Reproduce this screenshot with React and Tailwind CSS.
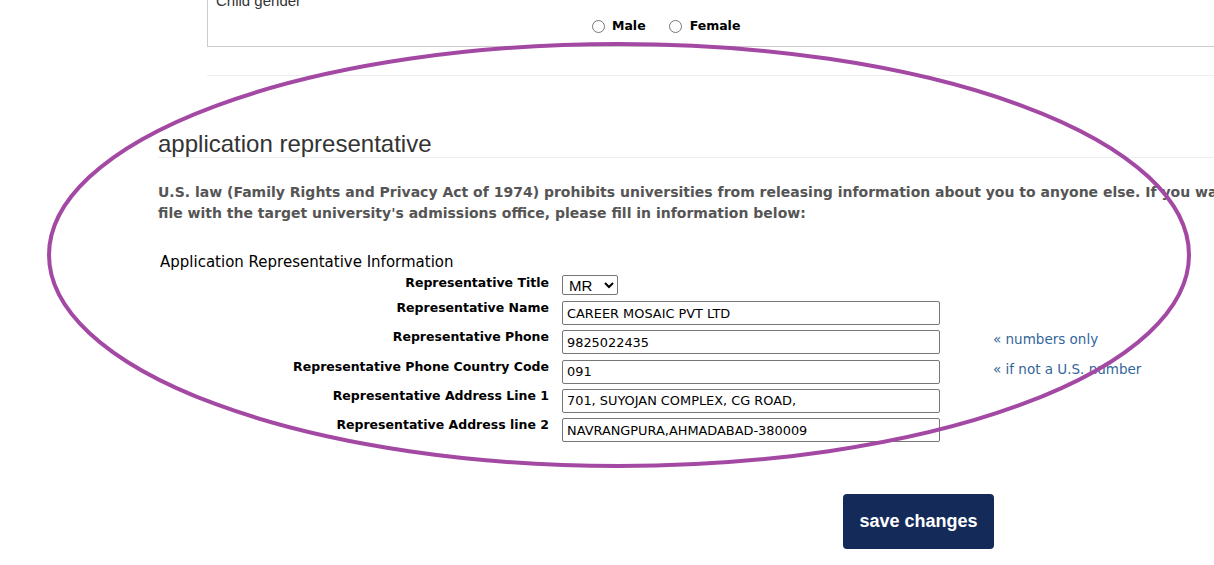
import React from 'react'

const verdana = { fontFamily: '"DejaVu Sans", Verdana, sans-serif' }

const rows = [
  { label: 'Representative Name', value: 'CAREER MOSAIC PVT LTD' },
  { label: 'Representative Phone', value: '9825022435', hint: '« numbers only' },
  { label: 'Representative Phone Country Code', value: '091', hint: '« if not a U.S. number' },
  { label: 'Representative Address Line 1', value: '701, SUYOJAN COMPLEX, CG ROAD,' },
  { label: 'Representative Address line 2', value: 'NAVRANGPURA,AHMADABAD-380009' },
]

function Label({ children }) {
  return (
    <div className="w-[404px] shrink-0 pr-[13px] text-right text-[12.5px] font-bold leading-[16px] text-black font-['DejaVu_Sans',sans-serif]">
      {children}
    </div>
  )
}

function FieldRow({ label, value, hint }) {
  return (
    <div className="flex h-[29.25px] items-start">
      <Label>{label}</Label>
      <input
        readOnly
        value={value}
        className="mt-[1px] h-[24px] w-[378px] rounded-[2px] border border-[#767676] bg-white px-[4px] text-[12.9px] text-black outline-none font-['DejaVu_Sans',sans-serif]"
      />
      {hint && (
        <span className="ml-[53px] mt-[2px] text-[13.5px] leading-[17px] text-[#336699] font-['DejaVu_Sans',sans-serif]">
          {hint}
        </span>
      )}
    </div>
  )
}

export default function App() {
  return (
    <div className="relative h-[565px] w-[1214px] overflow-hidden bg-white font-['Liberation_Sans',Arial,sans-serif]">
      {/* previous section (cut off at the top) */}
      <div className="ml-[207px] mt-[-14px] h-[61px] w-[1100px] border border-[#cccccc] px-[8px]">
        <div className="pt-[5px] text-[15px] leading-[18px] text-[#333333]">Child gender</div>
        <div className="ml-[376px] mt-[7px] flex items-center text-[12.5px] font-bold text-black" style={verdana}>
          <input type="radio" name="g" className="m-0 h-[13px] w-[13px]" />
          <span className="ml-[7px]">Male</span>
          <input type="radio" name="g" className="m-0 ml-[23px] h-[13px] w-[13px]" />
          <span className="ml-[8px]">Female</span>
        </div>
      </div>
      <div className="ml-[207px] mt-[28px] h-px w-[1100px] bg-[#eeeeee]" />

      {/* application representative */}
      <div className="ml-[158px] mt-[55px] w-[1100px]">
        <h2 className="border-b border-[#eeeeee] text-[24px] leading-[26px] text-[#333333]">
          application representative
        </h2>
        <p className="mt-[24px] whitespace-nowrap text-[14px] font-bold leading-[21px] text-[#555555]" style={verdana}>
          U.S. law (Family Rights and Privacy Act of 1974) prohibits universities from releasing information about you to anyone else. If you want to have an application representative on
          <br />
          file with the target university's admissions office, please fill in information below:
        </p>

        <div className="mt-[30px] ml-[2px] text-[15px] leading-[17px] text-black" style={verdana}>
          Application Representative Information
        </div>

        <div className="mt-[4px] flex h-[25px] items-start">
          <Label>Representative Title</Label>
          <select
            defaultValue="MR"
            className="h-[20px] w-[56px] rounded-[2px] border border-[#767676] bg-white pl-[2px] text-[15px] leading-[18px] text-black"
          >
            <option>MR</option>
            <option>MS</option>
          </select>
        </div>
        {rows.map((r) => (
          <FieldRow key={r.label} {...r} />
        ))}
      </div>

      <div className="mt-[48px] ml-[843px]">
        <button className="h-[55px] w-[151px] rounded-[4px] bg-[#142b5a] text-[18px] font-bold text-white">
          save changes
        </button>
      </div>

      {/* hand-drawn highlight over the section */}
      <svg className="pointer-events-none absolute left-0 top-0" width="1214" height="565">
        <ellipse cx="619" cy="255" rx="570" ry="211" fill="none" stroke="#a349a4" strokeWidth="4" />
      </svg>
    </div>
  )
}
